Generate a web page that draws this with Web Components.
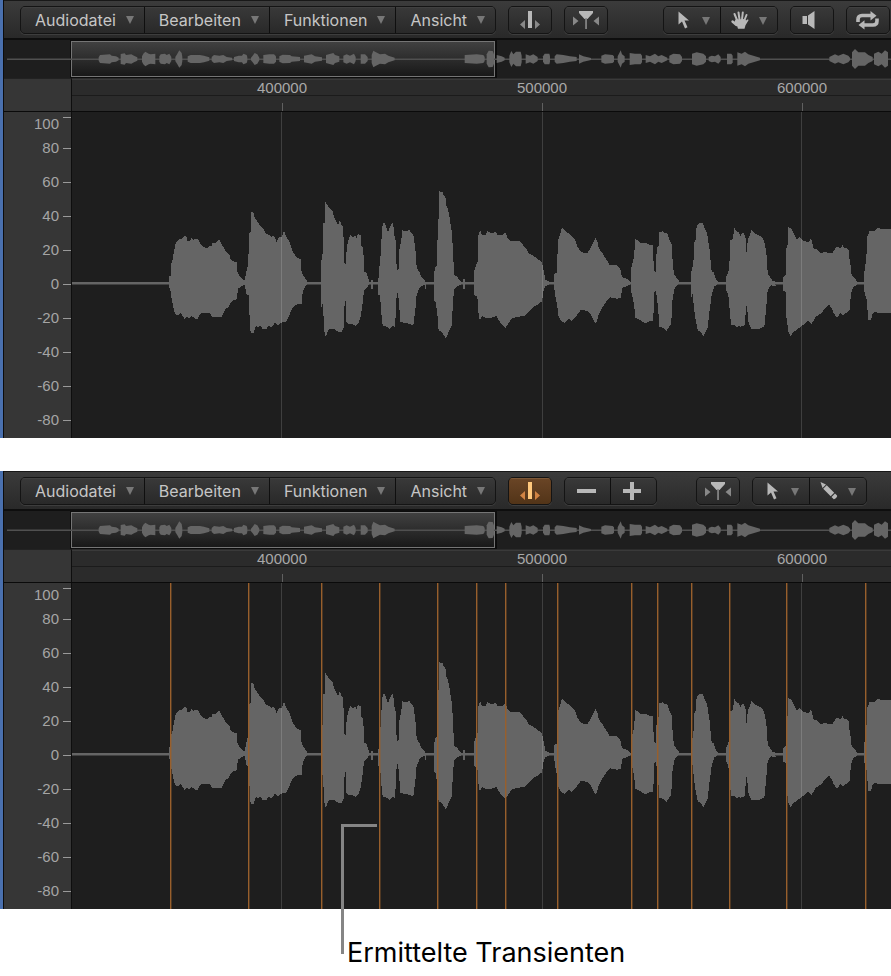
<!DOCTYPE html>
<html lang="de">
<head>
<meta charset="utf-8">
<meta name="viewport" content="width=device-width, initial-scale=1">
<title>Audio-Editor</title>
<style>
  body { margin: 0; background: #fff; color: #000; font-family: Inter, "Liberation Sans", sans-serif; }
  main { display: flex; flex-direction: column; }
  audio-editor + audio-editor { margin-top: 33px; }
</style>
</head>
<body>
<main>
  <audio-editor>
    <tool-bar slot="tools">
      <tool-group>
        <menu-button>Audiodatei</menu-button>
        <menu-button>Bearbeiten</menu-button>
        <menu-button>Funktionen</menu-button>
        <menu-button>Ansicht</menu-button>
      </tool-group>
      <tool-group><icon-button icon="transient" label="Transienten"></icon-button></tool-group>
      <tool-group><icon-button icon="catch" label="Catch"></icon-button></tool-group>
      <tool-group push>
        <icon-button icon="pointer" label="Zeiger" wide></icon-button>
        <icon-button icon="hand" label="Hand" wide></icon-button>
      </tool-group>
      <tool-group><icon-button icon="speaker" label="Vorhören"></icon-button></tool-group>
      <tool-group><icon-button icon="cycle" label="Cycle"></icon-button></tool-group>
    </tool-bar>
  </audio-editor>

  <audio-editor transients="170 248 321 379 437 476 505 557 631 657 691 729 786 865">
    <tool-bar slot="tools" inset>
      <tool-group>
        <menu-button>Audiodatei</menu-button>
        <menu-button>Bearbeiten</menu-button>
        <menu-button>Funktionen</menu-button>
        <menu-button>Ansicht</menu-button>
      </tool-group>
      <tool-group><icon-button icon="transient" label="Transienten" active></icon-button></tool-group>
      <tool-group>
        <icon-button icon="minus" label="Weniger"></icon-button>
        <icon-button icon="plus" label="Mehr"></icon-button>
      </tool-group>
      <tool-group push><icon-button icon="catch" label="Catch"></icon-button></tool-group>
      <tool-group>
        <icon-button icon="pointer" label="Zeiger" wide></icon-button>
        <icon-button icon="pencil" label="Stift" wide></icon-button>
      </tool-group>
    </tool-bar>
  </audio-editor>
  <callout-label>Ermittelte Transienten</callout-label>
</main>

<script>
class Base extends HTMLElement {
  render(html) {
    this.attachShadow({ mode: "open" }).innerHTML =
      "<style>:host,*{box-sizing:border-box}svg{display:block}</style>" + html;
  }
}

customElements.define("tool-bar", class extends Base {
  connectedCallback() {
    if (this.shadowRoot) return;
    this.render(`<style>
      :host { display: flex; align-items: center; gap: 12px; height: 40px; padding: 1px 1px 0 16px; overflow: hidden;
        background: linear-gradient(#3b3b3b, #292929); border-top: 1px solid #181818; border-bottom: 2px solid #0e0e0e; }
      :host([inset]) { padding-right: 24px; }
      ::slotted([push]) { margin-left: auto; }
    </style><slot></slot>`);
  }
});

customElements.define("tool-group", class extends Base {
  connectedCallback() {
    if (this.shadowRoot) return;
    this.render(`<style>
      :host { display: flex; flex: none; gap: 1px; height: 28px; border: 1px solid #141414; border-radius: 5px;
        background: #0f0f0f; overflow: hidden; box-shadow: 0 1px 0 #3d3d3d; }
    </style><slot></slot>`);
  }
});

const buttonStyle = `
  :host { display: flex; }
  button { display: flex; align-items: center; margin: 0; padding: 0; border: 0; font: inherit; color: #c6c6c6;
    background: linear-gradient(#393939, #292929); box-shadow: inset 0 1px 0 #404040; }`;

customElements.define("menu-button", class extends Base {
  connectedCallback() {
    if (this.shadowRoot) return;
    this.render(`<style>${buttonStyle}
      button { gap: 10px; padding: 0 10px 0 14px; font-size: 16px; line-height: 26px; }
    </style>
    <button type="button" aria-haspopup="menu"><slot></slot>
      <svg width="8" height="8" viewBox="0 0 8 8" aria-hidden="true"><path d="M0 0H8L4 8Z" fill="#777"/></svg>
    </button>`);
  }
});

const icons = {
  transient: `<path class="m" d="M20 4h4v17h-4z"/><path class="s" d="M17 13v9l-5-4.500zM27 13v9l5-4.500z"/>`,
  catch: `<path class="m" d="M15 4h14v2l-5.500 6h-3L15 6z"/><path class="s" d="M21.200 11h1.700v11h-1.700z"/><path class="s" d="M9 9.500v9l5.500-4.500zM35 9.500v9L29.500 14z"/>`,
  minus: `<path class="m" d="M13 11h19v4H13z"/>`,
  plus: `<path class="m" d="M13 11h7V4h4v7h7v4h-7v7h-4v-7h-7z"/>`,
  pointer: `<path class="m" d="M15.500 4.500v13l3.500-3 3 7 2.500-1.200-3-6.800H26z"/>`,
  hand: `<g fill="none" stroke="#b8b8b8" stroke-width="2" stroke-linecap="round"><path d="M17 13l-2.500-6M19.500 12.500L18.500 5.500M22 12.500l.8-7M24.300 13.500L26.500 8"/><path d="M16.500 18l-4-3.500" stroke-width="2.400"/></g><path class="m" d="M15.500 12.500l9.500-.5 1 1.500 2-1.200.5 1-3 5-1 3.500h-6.500l-.8-2.500-3.200-3.500z"/>`,
  pencil: `<path class="m" d="M11.500 4l5.500 2.500-3.500 3.500zM17.700 7.200l7.500 7.500-3.500 3.500-7.500-7.500zM26 15.500l2 2c1 1-2.500 4.500-3.500 3.500l-2-2z"/>`,
  speaker: `<path class="m" d="M12.500 9h4.500v8h-4.500zM18 8.500L24.500 4v18L18 17.500z"/>`,
  cycle: `<path d="M12 15v-2.500q0-4 4-4h10" fill="none" stroke="#b8b8b8" stroke-width="3.600"/><path class="m" d="M24.500 4l6 4.700-6 4.700z"/><path d="M31 11.500V14q0 4-4 4H17" fill="none" stroke="#b8b8b8" stroke-width="3.600"/><path class="m" d="M18.500 22.500l-6-4.600 6-4.700z"/>`
};

customElements.define("icon-button", class extends Base {
  connectedCallback() {
    if (this.shadowRoot) return;
    const wide = this.hasAttribute("wide");
    const width = wide ? 56 : /minus|plus/.test(this.getAttribute("icon")) ? 45 : 42;
    this.render(`<style>${buttonStyle}
      .m { fill: #b8b8b8; } .s { fill: #888; }
      :host([active]) button { background: linear-gradient(#6a4526, #523418); box-shadow: inset 0 1px 0 #7d5838; }
      :host([active]) .m { fill: #ffc87c; } :host([active]) .s { fill: #d18343; }
    </style>
    <button type="button" aria-label="${this.getAttribute("label")}"${wide ? ' aria-haspopup="menu"' : ""}>
      <svg width="${width}" height="26" viewBox="1 0 ${width} 26" aria-hidden="true">
      ${icons[this.getAttribute("icon")]}${wide ? '<path d="M39 10h8l-4 8z" fill="#777"/>' : ""}</svg>
    </button>`);
  }
});

/* Overview envelope: pairs of x position and half height, in thirds of a pixel. */
const overview = `296,5 300,12 330,14 335,10 348,8 356,4|362,15 374,17 378,12 394,14 402,10 412,5|426,8 430,16 436,22 446,16 452,14 466,16|478,8 482,14 495,16 500,12 508,16 514,6|526,6 532,16 538,26 545,18 547,6|563,8 572,12 600,12 612,10 628,5|635,6 642,12 658,10 670,12 680,6 696,4|702,6 716,10 726,10 730,16 740,12 742,6|753,4 758,10 764,18 772,14 778,4|790,12 808,14 822,14 828,8|838,8 848,13 870,12 875,8 900,6|912,10 935,14 945,8 966,5|978,12 1000,18 1005,12 1018,8|1030,10 1040,14 1050,10 1062,16 1067,6|1082,14 1095,14 1103,6|1115,12 1120,25 1128,20 1140,14 1155,16 1165,10 1184,4|1394,12 1430,14 1450,12 1454,6|1460,14 1466,25 1478,24 1482,14|1490,12 1505,8 1514,4|1528,10 1534,24 1540,14 1548,22 1562,22 1565,10|1577,14 1590,10 1600,14 1613,6|1629,8 1634,16 1648,16 1650,8|1664,8 1670,14 1690,12 1710,8 1730,6|1737,14 1750,8 1773,3|1804,10 1815,14 1838,12 1842,8|1853,8 1860,22 1862,26 1866,14 1874,8|1889,18 1905,16 1922,16 1926,10|1937,12 1950,8 1965,16 1975,8 1985,12 2002,4|2008,10 2020,16 2040,14 2046,6|2076,16 2090,20 2110,16 2118,8|2126,6 2135,10 2145,8 2155,14 2162,6|2181,16 2194,16 2198,10|2212,20 2225,16 2235,22 2245,14 2265,8 2280,4|2488,6 2505,14 2515,10 2530,16 2545,10 2550,4|2556,20 2565,30 2575,20 2595,20 2605,12 2618,6|2622,16 2635,22 2645,16 2655,26 2664,20`;

const overviewShapes = overview.split("|").map(part => {
  const pts = part.split(" ").map(p => p.split(",").map(Number));
  const up = pts.map(([x, h]) => `${x},${-h}`), down = pts.reverse().map(([x, h]) => `${x},${h}`);
  return `<polygon points="${up.concat(down).join(" ")}"/>`;
}).join("");

customElements.define("wave-overview", class extends Base {
  connectedCallback() {
    if (this.shadowRoot) return;
    this.render(`<style>
      :host { display: block; height: 38px; background: #1e1e1e; overflow: hidden; }
    </style>
    <svg width="100%" height="38" aria-hidden="true">
      <defs><linearGradient id="sel" x2="0" y2="1"><stop stop-color="#414141"/><stop offset="1" stop-color="#181818"/></linearGradient></defs>
      <rect x="66" width="427" height="38" fill="#0c0c0c"/>
      <rect x="67.500" y="1.500" width="423" height="35" fill="url(#sel)" stroke="#757575"/>
      <rect x="3" y="18.500" width="100%" height="1.500" fill="#505050"/>
      <g fill="#656565" transform="translate(0 19) scale(.333333) translate(-12 0)">${overviewShapes}</g>
    </svg>`);
  }
});

customElements.define("time-ruler", class extends Base {
  connectedCallback() {
    if (this.shadowRoot) return;
    this.render(`<style>
      :host { display: grid; grid-template-columns: 68px minmax(0, 1fr); height: 34px; background: #2b2b2b;
        border-bottom: 1px solid #0a0a0a; font: 15px/18px "Liberation Sans", sans-serif; color: #a8a8a8; }
      .corner { background: #363636; border-right: 1px solid #0e0e0e; border-top: 1px solid #222; }
      .marks { display: flex; padding-left: 80px; overflow: hidden;
        background: linear-gradient(#1b1b1b, #1b1b1b) 0 17px / 100% 1px no-repeat, linear-gradient(#3a3a3a, #3a3a3a) 0 1px / 100% 1px no-repeat, #2b2b2b; }
      .mark { flex: none; width: 260px; display: flex; flex-direction: column; align-items: center; justify-content: space-between; }
      .mark span { padding-top: 1px; }
      i { width: 1px; height: 8px; background: #606060; }
    </style>
    <div class="corner"></div>
    <div class="marks">${[400000, 500000, 600000].map(n => `<div class="mark"><span>${n}</span><i></i></div>`).join("")}</div>`);
  }
});

customElements.define("level-scale", class extends Base {
  connectedCallback() {
    if (this.shadowRoot) return;
    this.render(`<style>
      :host { display: flex; flex-direction: column; background: #363636; border-right: 1px solid #0e0e0e;
        overflow: hidden; font: 15px/18px "Liberation Sans", sans-serif; color: #a5a5a5; }
      div { flex: none; display: flex; align-items: center; justify-content: flex-end; gap: 4px; height: 34px; }
      i { width: 8px; height: 1px; background: #9a9a9a; }
      .top { height: 19px; align-items: flex-start; }
      .top span { padding-top: 3px; }
      .top i { margin-top: 5px; }
    </style>
    ${[100, 80, 60, 40, 20, 0, -20, -40, -60, -80].map(n => `<div${n === 100 ? ' class="top"' : ""}><span>${n}</span><i></i></div>`).join("")}`);
  }
});

/* Waveform outlines in thirds of a pixel, grouped by their origin in the plot. */
const wave = [
  [78, 88, `58,228 62,228 64,190 68,180 70,165 74,145 76,132 82,122 88,118 94,118 98,112 106,108 110,112 112,122 120,124 124,114 130,120 134,118 140,116 146,122 150,130 158,138 166,144 172,144 178,137 186,138 188,128 198,128 206,118 212,126 218,138 224,148 232,160 238,164 242,178 248,184 260,186 262,216 268,228 276,236 284,242 284,254 276,258 264,266 260,298 246,302 236,320 226,328 216,350 210,352 188,352 180,340 158,338 148,344 142,360 132,352 124,348 118,355 110,350 104,357 98,348 92,340 84,346 76,342 72,330 68,310 64,290 62,275 58,262`],
  [168, 68, `12,305 16,292 18,278 22,264 24,248 26,215 28,160 32,155 32,112 34,96 42,98 44,116 50,122 56,130 62,140 70,146 76,160 88,166 94,170 100,168 106,174 110,188 116,172 126,170 130,155 134,155 138,170 146,180 152,196 158,215 168,230 182,238 184,270 190,288 202,302 202,314 194,322 188,334 186,372 168,374 158,382 152,395 146,410 140,424 130,426 122,430 114,438 104,428 96,442 86,438 78,448 68,448 60,435 54,442 48,436 44,448 40,460 32,460 30,425 26,372 26,345 20,345 16,325
|244,305 244,245 250,205 250,130 254,128 256,66 262,74 266,82 272,88 278,92 282,112 288,124 294,136 300,118 304,136 310,142 312,248 318,252 320,204 326,178 332,164 338,172 346,166 350,174 354,162 362,166 364,196 370,206 372,274 380,280 386,298 386,314 380,324 372,330 368,368 362,410 356,430 348,438 342,434 324,432 318,425 318,362 314,362 312,440 304,456 292,454 280,446 268,448 262,456 258,472 254,462 252,430 248,370 244,384
|415,302 417,272 421,240 423,200 427,138 432,126 438,138 444,156 450,142 456,128 460,134 462,160 468,188 470,270 476,268 478,210 484,180 487,150 496,154 508,150 512,158 520,166 526,204 530,262 538,276 544,290 556,302 558,314 546,318 538,326 530,344 526,390 520,436 510,432 490,428 480,424 478,378 474,340 470,340 468,400 464,440 456,438 448,448 440,440 428,436 424,400 420,345 415,345
|582,306 584,265 590,258 590,190 594,175 596,100 598,34 608,36 612,48 616,48 618,74 624,86 630,120 636,160 640,230 642,286 650,288 656,298 662,304 662,314 652,318 642,328 638,380 636,435 626,456 618,476 612,466 604,454 596,452 592,400 586,362 583,362
|394,300 398,300 398,326 394,326|554,305 558,305 558,328 554,328|670,298 674,298 674,328 670,328`],
  [388, 68, `42,306 43,272 50,250 54,245 54,170 60,150 66,164 76,166 82,154 98,160 108,154 112,166 126,166 136,158 142,172 150,182 178,182 188,194 198,206 208,222 218,226 230,234 246,248 250,266 256,300 268,304 268,314 256,318 250,336 246,364 232,374 220,380 208,394 196,406 178,410 158,414 146,428 136,444 124,432 116,420 110,408 92,414 76,414 66,408 60,422 56,410 54,360 50,348 43,346
|282,306 282,282 290,278 292,240 294,180 300,164 306,142 316,154 326,160 338,170 346,180 352,200 360,212 372,220 382,220 390,206 398,192 406,174 412,184 416,204 426,218 440,240 450,256 466,254 480,264 486,292 500,296 512,306 512,312 502,318 488,322 482,354 470,356 450,352 438,366 426,384 416,404 408,432 400,420 392,404 380,392 362,390 350,406 334,424 328,416 314,430 304,422 296,412 292,378 284,338
|512,306 514,262 520,242 524,205 526,178 536,182 542,190 560,190 570,196 578,194 582,272 588,278 590,206 596,196 598,156 608,154 614,160 622,160 630,184 636,196 638,250 642,282 656,302 658,312 648,318 642,332 636,368 634,430 624,446 620,452 610,444 598,440 594,380 588,334 582,336 580,424 568,424 556,430 540,420 526,414 522,372 514,336`],
  [589, 68, `90,306 92,262 97,258 99,190 104,180 107,138 114,130 126,130 132,148 138,158 142,186 146,210 150,256 152,274 158,276 164,296 170,304 168,316 160,318 152,346 146,390 140,444 134,456 128,468 118,456 110,450 104,420 98,380 96,336 91,352
|194,306 195,290 202,280 206,240 207,182 216,176 220,142 226,154 232,156 238,168 246,156 254,174 255,216 258,216 260,182 268,160 272,150 282,160 300,170 306,176 312,192 318,236 320,280 328,292 336,304 342,302 344,318 330,316 320,330 316,380 310,440 296,446 270,446 262,424 258,378 255,378 252,436 240,440 232,438 228,444 222,436 210,434 206,390 202,344 195,328
|366,306 367,290 374,284 374,210 380,195 382,142 390,144 398,160 406,178 416,172 430,184 444,186 450,174 458,206 468,208 480,220 492,214 502,220 514,220 526,200 540,204 544,194 550,204 562,206 566,240 570,264 572,286 580,294 588,304 588,314 576,322 570,340 566,390 556,398 546,408 540,398 528,412 518,400 512,384 504,374 494,384 478,402 464,410 452,432 442,422 430,432 414,444 398,456 388,468 382,454 376,410 374,336 367,332
|609,306 611,264 616,240 618,172 626,152 640,154 650,142 664,148 690,148 700,150 700,400 670,400 650,400 642,394 634,404 630,420 622,420 616,350 611,346`]
];
const waveShapes = wave.map(([x, y, parts]) =>
  `<g transform="translate(${x} ${y}) scale(.333333)">${parts.split("|").map(p => `<polygon points="${p.trim()}"/>`).join("")}</g>`).join("");

customElements.define("wave-plot", class extends Base {
  connectedCallback() {
    if (this.shadowRoot) return;
    const marks = (this.getAttribute("transients") || "").split(" ").filter(Boolean);
    this.render(`<style>:host { display: block; background: #1e1e1e; overflow: hidden; }</style>
    <svg width="100%" height="326" role="img" aria-label="Wellenform">
      <g fill="#656565"><rect y="170" width="100%" height="2.500"/><g shape-rendering="crispEdges">${waveShapes}</g></g>
      <g fill="#fff" fill-opacity=".15">${[209, 470, 729].map(x => `<rect x="${x}" width="1" height="100%"/>`).join("")}</g>
      <g fill="#985f2c">${marks.map(x => `<rect x="${x - 72}" width="1.400" height="100%"/>`).join("")}</g>
    </svg>`);
  }
});

customElements.define("audio-editor", class extends Base {
  connectedCallback() {
    if (this.shadowRoot) return;
    this.render(`<style>
      :host { display: block; background: #1e1e1e; border-left: 3px solid #4a70ae; }
      .frame { border-left: 1px solid #0c0c0c; }
      .body { display: grid; grid-template-columns: 68px minmax(0, 1fr); }
    </style>
    <div class="frame">
      <slot name="tools"></slot>
      <wave-overview></wave-overview>
      <time-ruler></time-ruler>
      <div class="body"><level-scale></level-scale><wave-plot transients="${this.getAttribute("transients") || ""}"></wave-plot></div>
    </div>`);
  }
});

customElements.define("callout-label", class extends Base {
  connectedCallback() {
    if (this.shadowRoot) return;
    this.render(`<style>
      :host { display: block; position: relative; padding: 28px 0 8px 347px; font-size: 27px; line-height: 32px; }
      .lead { position: absolute; left: 341px; top: -85px; width: 36px; height: 130px;
        border-left: 3px solid #858585; border-top: 3px solid #858585; }
    </style><div class="lead"></div><slot></slot>`);
  }
});
</script>
</body>
</html>
